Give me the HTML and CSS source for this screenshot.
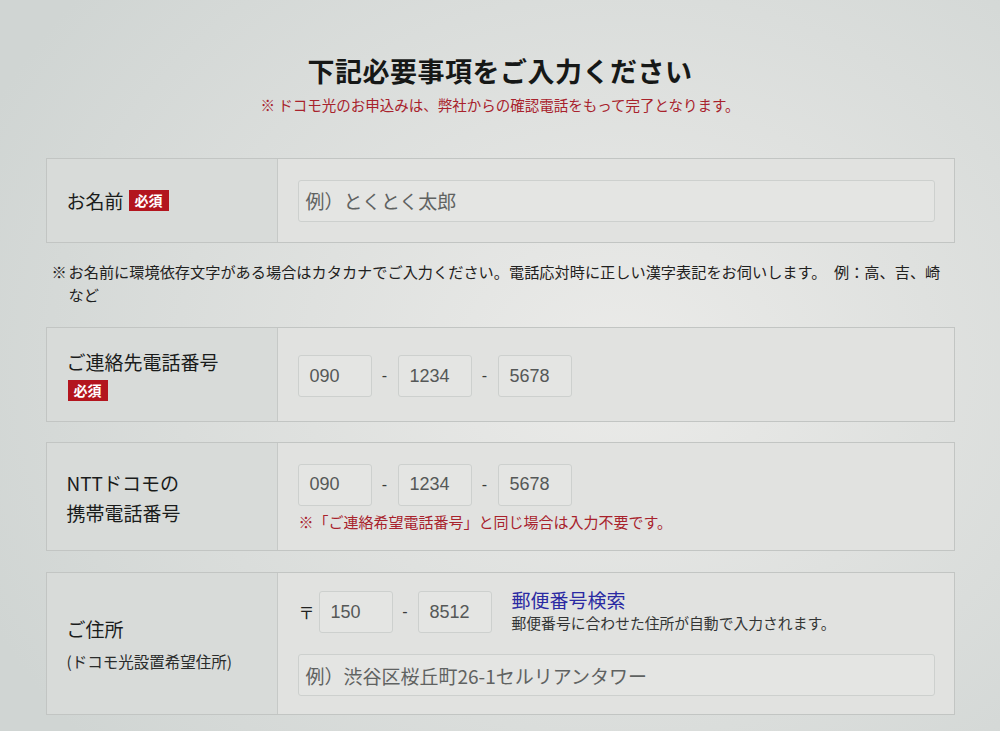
FILE: index.html
```html
<!DOCTYPE html>
<html lang="ja">
<head>
<meta charset="utf-8">
<title>お申込みフォーム</title>
<link rel="stylesheet" href="styles.css">
</head>
<body>
<main class="page">
  <header class="head">
    <h1 class="title">下記必要事項をご入力ください</h1>
    <p class="subtitle">※ ドコモ光のお申込みは、弊社からの確認電話をもって完了となります。</p>
  </header>

  <section class="row row-name">
    <div class="label"><span class="label-text">お名前</span><span class="badge">必須</span></div>
    <div class="field">
      <div class="input input-wide placeholder">例）とくとく太郎</div>
    </div>
  </section>

  <p class="note"><span class="mark">※</span><span>お名前に環境依存文字がある場合はカタカナでご入力ください。電話応対時に正しい漢字表記をお伺いします。　例：高、吉、崎など</span></p>

  <section class="row row-tel">
    <div class="label label-stack"><span class="label-text">ご連絡先電話番号</span><span class="badge">必須</span></div>
    <div class="field">
      <div class="tel">
        <div class="input input-short">090</div><span class="dash">-</span>
        <div class="input input-short">1234</div><span class="dash">-</span>
        <div class="input input-short">5678</div>
      </div>
    </div>
  </section>

  <section class="row row-mobile">
    <div class="label"><span class="label-text two-line">NTTドコモの<br>携帯電話番号</span></div>
    <div class="field">
      <div class="tel">
        <div class="input input-short">090</div><span class="dash">-</span>
        <div class="input input-short">1234</div><span class="dash">-</span>
        <div class="input input-short">5678</div>
      </div>
      <p class="red-note">※「ご連絡希望電話番号」と同じ場合は入力不要です。</p>
    </div>
  </section>

  <section class="row row-address">
    <div class="label label-stack"><span class="label-text">ご住所</span><span class="label-sub">(ドコモ光設置希望住所)</span></div>
    <div class="field">
      <div class="zip">
        <span class="zip-mark">〒</span>
        <div class="input input-short">150</div><span class="dash">-</span>
        <div class="input input-short">8512</div>
        <div class="zip-help">
          <a class="zip-link" href="#">郵便番号検索</a>
          <span class="zip-desc">郵便番号に合わせた住所が自動で入力されます。</span>
        </div>
      </div>
      <div class="input input-wide placeholder addr">例）渋谷区桜丘町26-1セルリアンタワー</div>
    </div>
  </section>
</main>
</body>
</html>
```

FILE: styles.css
```css
* { box-sizing: border-box; }

html, body {
  margin: 0;
  height: 731px;
  overflow: hidden;
}

body {
  font-family: "Noto Sans CJK JP", "Noto Sans", sans-serif;
  color: #1e201f;
  background: radial-gradient(ellipse 70% 80% at 62% 50%, #ebebe9 0%, #dfe1df 45%, #d0d5d3 100%);
}

.page {
  width: 909px;
  margin: 0 auto;
  padding-top: 52px;
}

.head {
  text-align: center;
}

.title {
  margin: 0;
  font-size: 27px;
  line-height: 38px;
  font-weight: 700;
  color: #161817;
  letter-spacing: 0.5px;
}

.subtitle {
  margin: 5px 0 0;
  font-size: 14.5px;
  line-height: 20px;
  color: #a8222c;
}

.row {
  display: flex;
  border: 1px solid #c2c5c3;
  background: #dfe1df;
}

.row-name { margin-top: 43px; min-height: 85px; }
.row-tel { min-height: 95px; }
.row-mobile { margin-top: 20px; min-height: 109px; }
.row-address { margin-top: 21px; min-height: 143px; }

.label {
  width: 231px;
  flex: none;
  display: flex;
  align-items: center;
  gap: 4px;
  padding-left: 20px;
  border-right: 1px solid #c6c9c7;
  background: #d8dbd9;
}

.label-stack {
  flex-direction: column;
  align-items: flex-start;
  justify-content: center;
  gap: 5px;
}

.label-text {
  font-size: 19px;
  line-height: 26px;
  color: #1a1c1b;
}

.label-text.two-line {
  line-height: 30px;
  margin-top: 2px;
}

.label-sub {
  font-size: 15.5px;
  line-height: 20px;
  color: #2a2c2b;
  margin-top: 4px;
}

.badge {
  display: inline-block;
  background: #b3151e;
  color: #ffffff;
  font-size: 14px;
  font-weight: 700;
  line-height: 21px;
  padding: 0 6px;
  margin-left: 1px;
}

.field {
  flex: 1;
  display: flex;
  flex-direction: column;
  justify-content: center;
  padding: 18px 19px 18px 20px;
  background: #e1e2e0;
}

.input {
  height: 42px;
  border: 1px solid #cdd0ce;
  border-radius: 3px;
  background: #e4e5e3;
  display: flex;
  align-items: center;
  padding-left: 11px;
  font-family: "Liberation Sans", "Noto Sans CJK JP", sans-serif;
  font-size: 18px;
  color: #555857;
}

.input-wide { width: 100%; }

.input-short { width: 74px; }

.placeholder {
  font-family: "Noto Sans CJK JP", sans-serif;
  font-size: 19px;
  color: #5f6261;
  padding-left: 7px;
}

.tel, .zip {
  display: flex;
  align-items: center;
}

.dash {
  width: 26px;
  text-align: center;
  font-family: "Liberation Sans", sans-serif;
  font-size: 16px;
  color: #3a3c3b;
}

.row-tel .field { padding-top: 27px; padding-bottom: 24px; }

.row-mobile .field { padding-top: 20px; padding-bottom: 18px; }

.red-note {
  margin: 6px 0 0;
  padding-left: 1px;
  font-size: 15px;
  line-height: 20px;
  color: #a8222c;
}

.zip-mark {
  width: 21px;
  padding-left: 1px;
  font-size: 16px;
  color: #222;
}

.row-address .field { padding-top: 17px; }

.row-address .zip .dash { width: 25px; }

.zip-help {
  display: flex;
  flex-direction: column;
  margin-left: 20px;
  margin-top: -2px;
}

.zip-link {
  font-size: 19px;
  line-height: 24px;
  color: #2b2aa3;
  text-decoration: none;
}

.zip-desc {
  font-size: 14.8px;
  line-height: 22px;
  color: #333534;
}

.addr {
  margin-top: 20px;
  width: 100%;
}

.note {
  display: flex;
  margin: 17px 0 21px;
  padding-left: 6px;
  font-size: 15.2px;
  line-height: 23px;
  color: #1f2120;
}

.mark {
  flex: none;
  width: 17px;
}
```
